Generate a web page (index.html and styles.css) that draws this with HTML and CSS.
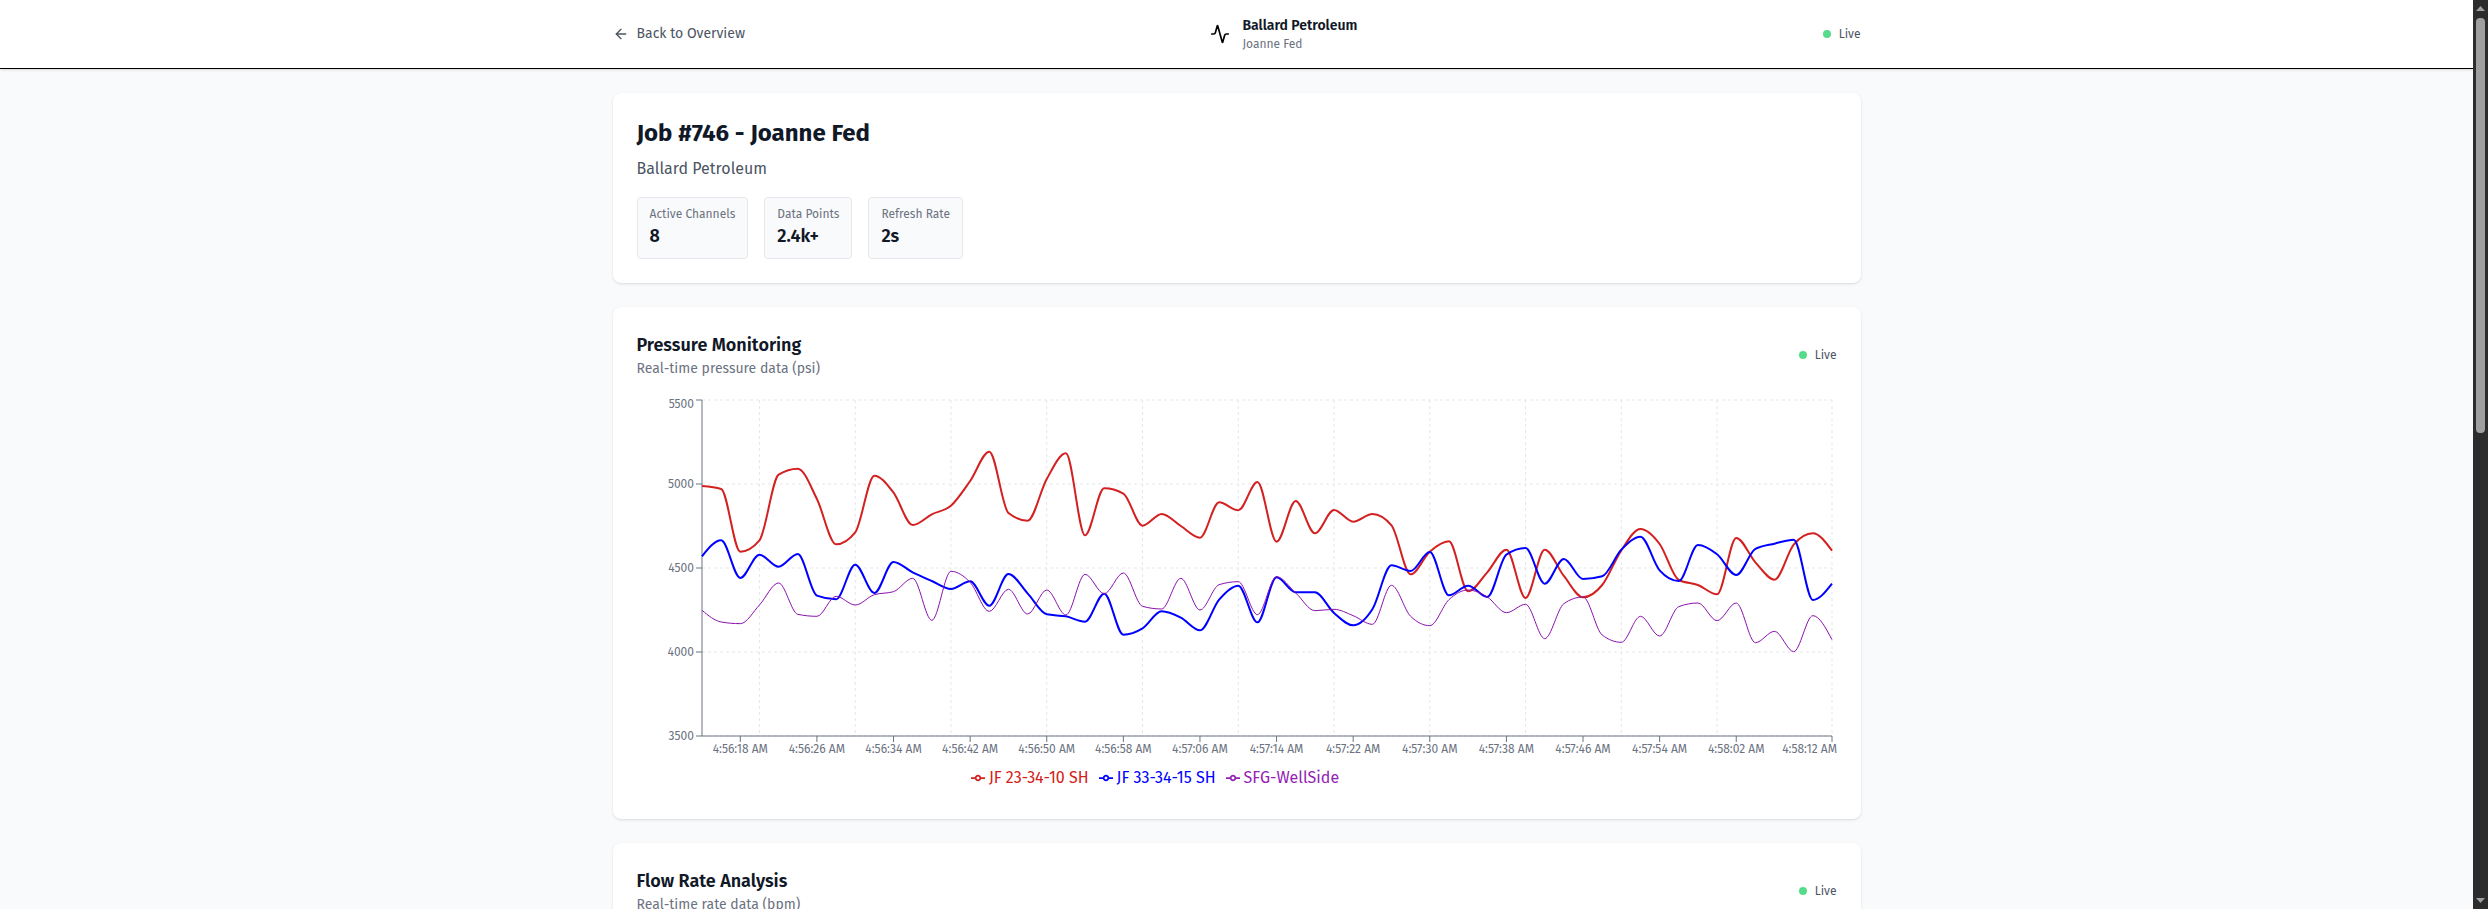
FILE: index.html
```html
<!DOCTYPE html>
<html lang="en">
<head>
  <meta charset="utf-8">
  <meta name="viewport" content="width=device-width, initial-scale=1">
  <title>Job #746 - Joanne Fed</title>
  <link rel="stylesheet" href="styles.css">
</head>
<body>
  <div class="viewport">
    <div class="page">
      <header class="topbar">
        <div class="container topbar-row">
          <a class="back" href="#">
            <svg class="icon-sm" viewBox="0 0 24 24" aria-hidden="true"><path d="m12 19-7-7 7-7"/><path d="M19 12H5"/></svg>
            Back to Overview
          </a>
          <div class="brand">
            <svg class="icon-md" viewBox="0 0 24 24" aria-hidden="true"><path d="M22 12h-2.48a2 2 0 0 0-1.93 1.46l-2.35 8.36a.25.25 0 0 1-.48 0L9.24 2.18a.25.25 0 0 0-.48 0l-2.35 8.36A2 2 0 0 1 4.49 12H2"/></svg>
            <div>
              <div class="brand-name">Ballard Petroleum</div>
              <div class="brand-sub">Joanne Fed</div>
            </div>
          </div>
          <div class="live"><span class="dot"></span>Live</div>
        </div>
      </header>

      <main class="container content">
        <section class="card">
          <h1 class="job-title">Job #746 - Joanne Fed</h1>
          <p class="job-client">Ballard Petroleum</p>
          <dl class="stats">
            <div class="stat"><dt>Active Channels</dt><dd>8</dd></div>
            <div class="stat"><dt>Data Points</dt><dd>2.4k+</dd></div>
            <div class="stat"><dt>Refresh Rate</dt><dd>2s</dd></div>
          </dl>
        </section>

        <section class="card">
          <div class="card-head">
            <div>
              <h2 class="card-title">Pressure Monitoring</h2>
              <p class="card-sub">Real-time pressure data (psi)</p>
            </div>
            <div class="live"><span class="dot"></span>Live</div>
          </div>
          <div class="chart">
            <svg class="plot" id="pressure" role="img" aria-label="Pressure over time"></svg>
            <ul class="legend">
              <li class="series-red"><svg viewBox="0 0 32 32" aria-hidden="true"><path d="M0,16h10.67A5.33,5.33,0,1,1,21.33,16H32M21.33,16A5.33,5.33,0,1,1,10.67,16"/></svg>JF 23-34-10 SH</li>
              <li class="series-blue"><svg viewBox="0 0 32 32" aria-hidden="true"><path d="M0,16h10.67A5.33,5.33,0,1,1,21.33,16H32M21.33,16A5.33,5.33,0,1,1,10.67,16"/></svg>JF 33-34-15 SH</li>
              <li class="series-purple"><svg viewBox="0 0 32 32" aria-hidden="true"><path d="M0,16h10.67A5.33,5.33,0,1,1,21.33,16H32M21.33,16A5.33,5.33,0,1,1,10.67,16"/></svg>SFG-WellSide</li>
            </ul>
          </div>
        </section>

        <section class="card">
          <div class="card-head">
            <div>
              <h2 class="card-title">Flow Rate Analysis</h2>
              <p class="card-sub">Real-time rate data (bpm)</p>
            </div>
            <div class="live"><span class="dot"></span>Live</div>
          </div>
          <div class="chart"></div>
        </section>
      </main>
    </div>

    <div class="scrollbar" aria-hidden="true">
      <svg class="arrow" viewBox="0 0 9 5"><path d="M4.5 0 9 5H0z"/></svg>
      <div class="track"><div class="thumb"></div></div>
      <svg class="arrow" viewBox="0 0 9 5"><path d="M0 0h9L4.500 5z"/></svg>
    </div>
  </div>
  <script src="app.js"></script>
</body>
</html>
```
FILE: styles.css
```css
* { box-sizing: border-box; margin: 0; padding: 0; }

body {
  font-family: "Fira Sans", "Noto Sans", sans-serif;
  font-size: 16px;
  line-height: 24px;
  color: #111827;
  overflow: hidden;
}

.viewport {
  display: grid;
  grid-template-columns: minmax(0, 1fr) 15px;
  height: 100vh;
}

.page { background: #f9fafb; overflow: hidden; }

.container {
  width: 100%;
  max-width: 1280px;
  margin: 0 auto;
  padding: 0 16px;
}

.topbar {
  background: #fff;
  border-bottom: 1px solid #000;
  box-shadow: 0 1px 3px rgba(0, 0, 0, .1), 0 1px 2px -1px rgba(0, 0, 0, .1);
}
.topbar-row {
  display: flex;
  align-items: center;
  justify-content: space-between;
  padding-top: 16px;
  padding-bottom: 16px;
}

.back {
  display: flex;
  align-items: center;
  gap: 8px;
  font-size: 14px;
  line-height: 20px;
  color: #4b5563;
  text-decoration: none;
}

.icon-sm, .icon-md {
  fill: none;
  stroke: currentColor;
  stroke-width: 2;
  stroke-linecap: round;
  stroke-linejoin: round;
}
.icon-sm { width: 16px; height: 16px; }
.icon-md { width: 20px; height: 20px; color: #000; }

.brand { display: flex; align-items: center; gap: 12px; }
.brand-name { font-size: 14px; line-height: 20px; font-weight: 600; }
.brand-sub { font-size: 12px; line-height: 16px; color: #6b7280; }

.live {
  display: flex;
  align-items: center;
  gap: 8px;
  font-size: 12px;
  line-height: 16px;
  color: #4b5563;
}
.dot { width: 8px; height: 8px; border-radius: 50%; background: #56db8b; }

.content {
  display: grid;
  gap: 24px;
  padding-top: 24px;
  padding-bottom: 24px;
}

.card {
  background: #fff;
  border-radius: 8px;
  padding: 24px;
  box-shadow: 0 1px 3px rgba(0, 0, 0, .1), 0 1px 2px -1px rgba(0, 0, 0, .1);
}

.job-title { font-size: 24px; line-height: 32px; font-weight: 700; margin-bottom: 8px; }
.job-client { color: #4b5563; margin-bottom: 16px; }

.stats { display: flex; gap: 16px; }
.stat {
  background: #f9fafb;
  border: 1px solid #e5e7eb;
  border-radius: 4px;
  padding: 8px 12px;
}
.stat dt { font-size: 12px; line-height: 16px; color: #6b7280; }
.stat dd { font-size: 18px; line-height: 28px; font-weight: 600; }

.card-head {
  display: flex;
  align-items: center;
  justify-content: space-between;
  margin-bottom: 16px;
}
.card-title { font-size: 18px; line-height: 28px; font-weight: 600; }
.card-sub { font-size: 14px; line-height: 20px; color: #6b7280; }

.chart { display: flex; flex-direction: column; height: 400px; }
.plot { width: 100%; height: 371px; overflow: visible; }
.plot text { font-size: 12px; fill: #6b7280; }
.grid { stroke: #e5e7eb; stroke-dasharray: 3 3; }
.axis { stroke: #6b7280; }
.line { fill: none; stroke: currentColor; stroke-width: 2; }
.line.thin { stroke-width: 1; stroke: #8a10ac; }

.legend {
  display: flex;
  justify-content: center;
  gap: 10px;
  padding-right: 163px;
  list-style: none;
}
.legend li { display: flex; align-items: center; gap: 4px; }
.legend svg { width: 14px; height: 14px; fill: none; stroke: currentColor; stroke-width: 4; }
.series-red { color: #d32020; }
.series-blue { color: #00f; }
.series-purple { color: #9422b4; }

.scrollbar {
  background: #2c2c2c;
  display: flex;
  flex-direction: column;
  align-items: center;
  gap: 7px;
  padding: 6px 0;
}
.arrow { width: 9px; height: 5px; fill: #9f9f9f; }
.track { flex: 1; width: 9px; }
.thumb { height: 47.5%; border-radius: 4px; background: #9f9f9f; }
```
FILE: app.js
```js
// Sensor counts, one sample every two seconds; larger counts mean lower pressure.
const toPsi = (count) => 5619 - count * 1.984;

const series = [
  { cls: "series-red", data: [318,327,515,481,284,266,357,493,457,287,338,435,403,377,303,215,399,422,297,220,466,325,341,437,402,438,473,367,391,306,485,363,460,390,425,402,436,583,515,484,634,577,509,654,509,588,652,615,511,447,492,600,615,643,474,547,599,494,460,512] },
  { cls: "series-blue", data: [529,481,594,524,560,522,647,658,554,639,546,577,603,627,604,677,582,640,703,709,725,641,764,745,694,713,751,659,617,727,592,637,637,699,736,688,556,573,516,646,617,651,524,504,611,537,597,589,509,470,571,603,495,523,585,507,491,479,660,611] },
  { cls: "series-purple thin", data: [691,726,731,675,609,703,709,649,675,644,635,595,721,574,607,694,628,702,630,705,583,641,579,679,687,595,690,614,605,704,590,639,692,688,707,733,616,709,737,659,630,651,698,673,776,671,651,765,787,709,768,680,669,722,669,788,754,815,707,779] }
];

const svg = document.getElementById("pressure");
const NS = "http://www.w3.org/2000/svg";

function add(tag, attrs, text) {
  const el = document.createElementNS(NS, tag);
  for (const key in attrs) el.setAttribute(key, attrs[key]);
  if (text) el.textContent = text;
  svg.appendChild(el);
  return el;
}

// Monotone cubic interpolation through the points.
function monotone(pts) {
  const n = pts.length;
  const slope = [];
  for (let i = 0; i < n - 1; i++) slope.push((pts[i + 1][1] - pts[i][1]) / (pts[i + 1][0] - pts[i][0]));
  const m = pts.map((p, i) => {
    if (i === 0 || i === n - 1) return 0;
    const a = slope[i - 1], b = slope[i];
    return (Math.sign(a) + Math.sign(b)) * Math.min(Math.abs(a), Math.abs(b), Math.abs(a + b) / 4) || 0;
  });
  m[0] = (3 * slope[0] - m[1]) / 2;
  m[n - 1] = (3 * slope[n - 2] - m[n - 2]) / 2;
  let d = `M${pts[0][0]},${pts[0][1]}`;
  for (let i = 0; i < n - 1; i++) {
    const [x0, y0] = pts[i], [x1, y1] = pts[i + 1], h = (x1 - x0) / 3;
    d += `C${x0 + h},${y0 + m[i] * h},${x1 - h},${y1 - m[i + 1] * h},${x1},${y1}`;
  }
  return d;
}

function timeLabel(i) {
  const s = 56 * 60 + 14 + i * 2;
  const total = 4 * 3600 + s;
  const pad = (v) => String(v).padStart(2, "0");
  return `${Math.floor(total / 3600)}:${pad(Math.floor(total / 60) % 60)}:${pad(total % 60)} AM`;
}

function draw() {
  svg.replaceChildren();
  const width = svg.clientWidth;
  const left = 65, right = width - 5, top = 5, bottom = 341, last = 59;
  const x = (i) => left + (right - left) * i / last;
  const y = (psi) => bottom - (psi - 3500) * (bottom - top) / 2000;

  for (let v = 3500; v <= 5500; v += 500) add("line", { class: "grid", x1: left, x2: right, y1: y(v), y2: y(v) });
  for (const i of [3, 8, 13, 18, 23, 28, 33, 38, 43, 48, 53, 59]) add("line", { class: "grid", x1: x(i), x2: x(i), y1: top, y2: bottom });

  add("line", { class: "axis", x1: left, x2: right, y1: bottom, y2: bottom });
  add("line", { class: "axis", x1: left, x2: left, y1: top, y2: bottom });
  for (let v = 3500; v <= 5500; v += 500) {
    add("line", { class: "axis", x1: left - 6, x2: left, y1: y(v), y2: y(v) });
    add("text", { x: left - 8, y: Math.max(y(v), 9), dy: "0.355em", "text-anchor": "end" }, String(v));
  }
  for (let i = 2; i <= last; i = i === 54 ? last : i + 4) {
    add("line", { class: "axis", x1: x(i), x2: x(i), y1: bottom, y2: bottom + 6 });
    const label = add("text", { x: x(i), y: bottom + 8, dy: "0.71em", "text-anchor": "middle" }, timeLabel(i));
    const half = label.getComputedTextLength() / 2;
    if (x(i) + half > width) label.setAttribute("x", width - half);
    if (i === last) break;
  }

  for (const s of series) {
    const pts = s.data.map((c, i) => [x(i), y(toPsi(c))]);
    add("path", { class: "line " + s.cls, d: monotone(pts) });
  }
}

draw();
window.addEventListener("resize", draw);
```
